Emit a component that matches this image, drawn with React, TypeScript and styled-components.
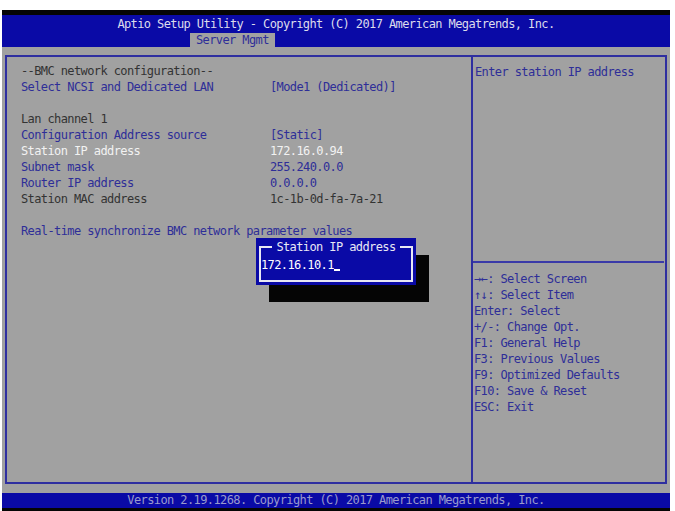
import React from 'react';
import styled, { createGlobalStyle } from 'styled-components';

const GlobalStyle = createGlobalStyle`
  html, body {
    margin: 0;
    padding: 0;
    background: #ffffff;
  }
  body {
    font-family: "DejaVu Sans Mono", "Liberation Mono", monospace;
    font-size: 12px;
    letter-spacing: -0.6px;
  }
`;

const GREY = '#a1a1a1';
const BLUE = '#0a0aa6';
const INK = '#2e2e98';
const DARK = '#333333';
const LIGHT = '#f2f2f2';

const Screen = styled.div`
  margin: 10px 0 0 2px;
  width: 668px;
  background: ${GREY};
  display: flex;
  flex-direction: column;
  border-top: 5px solid #050505;
  border-bottom: 3px solid #050505;
`;

const Header = styled.div`
  height: 32px;
  background: ${BLUE};
  display: flex;
  flex-direction: column;
  align-items: center;
  padding-top: 1px;
  box-sizing: border-box;
`;

const Title = styled.div`
  color: #dcdcec;
  line-height: 17px;
  height: 17px;
  white-space: pre;
`;

const TabRow = styled.div`
  width: 100%;
  display: flex;
  padding-left: 188px;
  box-sizing: border-box;
`;

const Tab = styled.div`
  background: ${GREY};
  color: ${INK};
  height: 14px;
  line-height: 15px;
  padding: 0 6px;
`;

const Body = styled.div`
  padding: 8px 3px 9px 3px;
`;

const Frame = styled.div`
  height: 429px;
  box-sizing: border-box;
  border: 2px solid #2f2fa0;
  display: flex;
`;

const Main = styled.div`
  position: relative;
  width: 466px;
  border-right: 2px solid #2f2fa0;
  padding: 6px 0 0 14px;
  box-sizing: border-box;
`;

const Row = styled.div<{ $tone: 'ink' | 'dark' | 'light' }>`
  display: grid;
  grid-template-columns: 249px 1fr;
  height: 16px;
  line-height: 16px;
  white-space: pre;
  color: ${(p) => (p.$tone === 'ink' ? INK : p.$tone === 'light' ? LIGHT : DARK)};
`;

const Blank = styled.div`
  height: 16px;
`;

const Side = styled.div`
  flex: 1;
  display: flex;
  flex-direction: column;
`;

const HelpTop = styled.div`
  height: 206px;
  padding: 7px 0 0 2px;
  box-sizing: border-box;
  color: ${INK};
  line-height: 16px;
  border-bottom: 2px solid #3a3aa8;
  margin-right: 1px;
`;

const Keys = styled.div`
  padding: 8px 0 0 1px;
  color: ${INK};
`;

const Key = styled.div`
  height: 16px;
  line-height: 16px;
  white-space: pre;
`;

const Popup = styled.div`
  position: absolute;
  left: 249px;
  top: 181px;
  width: 160px;
  height: 47px;
  background: ${BLUE};
  box-shadow: 13px 17px 0 #050505;
  padding: 8px 3px 7px 3px;
  box-sizing: border-box;
`;

const PopupInner = styled.div`
  height: 100%;
  border: 2px solid #e8e8f4;
  display: flex;
  flex-direction: column;
`;

const PopupTitle = styled.div`
  align-self: center;
  margin-top: -9px;
  padding: 0 4px;
  background: ${BLUE};
  color: #e8e8f4;
  line-height: 16px;
  height: 16px;
  white-space: pre;
`;

const Input = styled.div`
  color: #ffffff;
  line-height: 16px;
  margin-top: 2px;
  white-space: pre;
`;

const Caret = styled.span`
  border-bottom: 2px solid #ffffff;
  display: inline-block;
  width: 6px;
  height: 12px;
  vertical-align: top;
`;

const Footer = styled.div`
  height: 15px;
  line-height: 15px;
  background: ${BLUE};
  color: #9a9acc;
  text-align: center;
  white-space: pre;
`;

type Item = { label: string; value?: string; tone: 'ink' | 'dark' | 'light' } | null;

const items: Item[] = [
  { label: '--BMC network configuration--', tone: 'dark' },
  { label: 'Select NCSI and Dedicated LAN', value: '[Mode1 (Dedicated)]', tone: 'ink' },
  null,
  { label: 'Lan channel 1', tone: 'dark' },
  { label: 'Configuration Address source', value: '[Static]', tone: 'ink' },
  { label: 'Station IP address', value: '172.16.0.94', tone: 'light' },
  { label: 'Subnet mask', value: '255.240.0.0', tone: 'ink' },
  { label: 'Router IP address', value: '0.0.0.0', tone: 'ink' },
  { label: 'Station MAC address', value: '1c-1b-0d-fa-7a-21', tone: 'dark' },
  null,
  { label: 'Real-time synchronize BMC network parameter values', tone: 'ink' },
];

const keys = [
  '\u2192\u2190: Select Screen',
  '\u2191\u2193: Select Item',
  'Enter: Select',
  '+/-: Change Opt.',
  'F1: General Help',
  'F3: Previous Values',
  'F9: Optimized Defaults',
  'F10: Save & Reset',
  'ESC: Exit',
];

export default function App() {
  return (
    <>
      <GlobalStyle />
      <Screen>
        <Header>
          <Title>Aptio Setup Utility - Copyright (C) 2017 American Megatrends, Inc.</Title>
          <TabRow>
            <Tab>Server Mgmt</Tab>
          </TabRow>
        </Header>
        <Body>
          <Frame>
            <Main>
              {items.map((it, i) =>
                it ? (
                  <Row key={i} $tone={it.tone}>
                    <span>{it.label}</span>
                    {it.value && <span>{it.value}</span>}
                  </Row>
                ) : (
                  <Blank key={i} />
                )
              )}
              <Popup>
                <PopupInner>
                  <PopupTitle>Station IP address</PopupTitle>
                  <Input>
                    172.16.10.1<Caret />
                  </Input>
                </PopupInner>
              </Popup>
            </Main>
            <Side>
              <HelpTop>Enter station IP address</HelpTop>
              <Keys>
                {keys.map((k) => (
                  <Key key={k}>{k}</Key>
                ))}
              </Keys>
            </Side>
          </Frame>
        </Body>
        <Footer>Version 2.19.1268. Copyright (C) 2017 American Megatrends, Inc.</Footer>
      </Screen>
    </>
  );
}
